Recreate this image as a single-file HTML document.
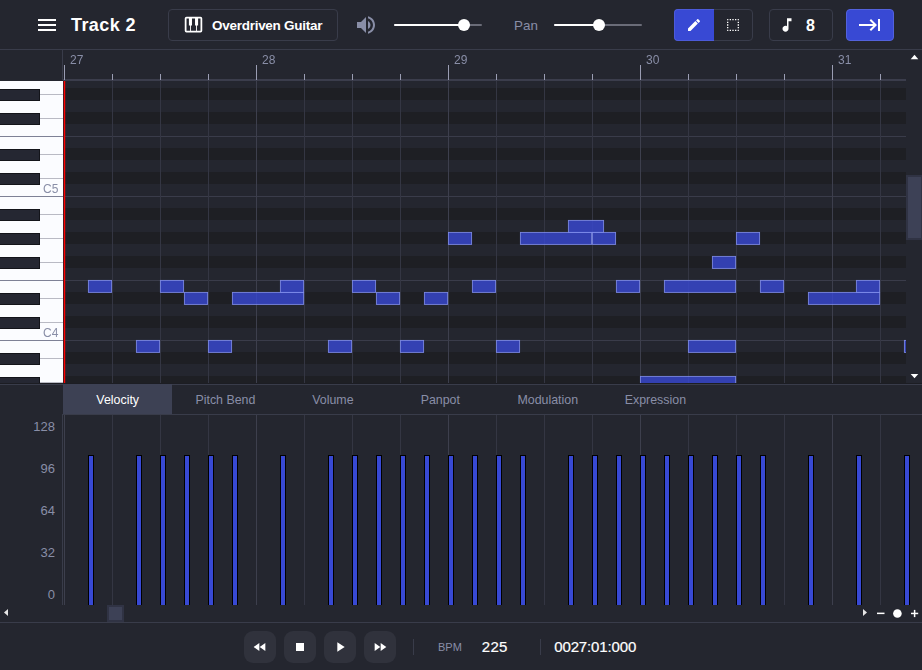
<!DOCTYPE html>
<html><head><meta charset="utf-8"><title>signal</title>
<style>

html,body{margin:0;padding:0;}
body{width:922px;height:670px;overflow:hidden;background:#24262f;font-family:"Liberation Sans",sans-serif;color:#fff;position:relative;}
.abs{position:absolute;}
.t{position:absolute;white-space:nowrap;line-height:1;}
svg{position:absolute;display:block;overflow:visible;}
.btn{position:absolute;box-sizing:border-box;border:1px solid #393c4a;border-radius:4px;}
.tab{position:absolute;top:384.6px;height:30px;line-height:30px;font-size:12.4px;color:#898ea7;text-align:center;white-space:nowrap;}
.tp{position:absolute;top:631px;width:32px;height:32px;border-radius:9px;background:#30323c;}
.rl,.kl{will-change:transform;}
.ax{position:absolute;right:867px;font-size:13px;color:#898ea7;line-height:1;white-space:nowrap;}

</style></head><body>
<div class="abs" style="left:0;top:49px;width:922px;height:1px;background:#393c4a"></div>
<svg style="left:35px;top:13px" width="24" height="24" viewBox="0 0 24 24"><path fill="#fff" d="M3 18h18v-2H3v2zm0-5h18v-2H3v2zm0-7v2h18V6H3z"/></svg>
<div class="t" id="title" style="left:71px;top:16px;font-size:18px;font-weight:bold;letter-spacing:0.4px;">Track 2</div>
<div class="btn" style="left:168px;top:9px;width:170px;height:32px;"></div>
<svg style="left:183.25px;top:14px" width="21" height="21" viewBox="0 0 24 24"><path fill="#fff" d="M4,3H20A2,2 0 0,1 22,5V19A2,2 0 0,1 20,21H4A2,2 0 0,1 2,19V5A2,2 0 0,1 4,3M4,5V19H8V13H6.75V5H4M9,19H15V13H13.750V5H10.25V13H9V19M16,19H20V5H17.25V13H16V19Z"/></svg>
<div class="t" id="inst" style="left:212px;top:18.5px;font-size:13.5px;font-weight:bold;letter-spacing:-0.27px;">Overdriven Guitar</div>
<svg style="left:354px;top:13px" width="24" height="24" viewBox="0 0 24 24"><path fill="#898ea7" d="M3 9v6h4l5 5V4L7 9H3zm13.500 3c0-1.770-1.020-3.290-2.500-4.030v8.050c1.480-.730 2.500-2.250 2.500-4.020zM14 3.230v2.060c2.890.860 5 3.540 5 6.710s-2.110 5.850-5 6.710v2.060c4.010-.910 7-4.490 7-8.770s-2.990-7.860-7-8.770z"/></svg>
<div class="abs" style="left:394px;top:24px;width:88px;height:2px;background:#6a6c78;border-radius:1px"></div>
<div class="abs" style="left:394px;top:24px;width:70.0px;height:2px;background:#fff;border-radius:1px"></div>
<div class="abs" style="left:458.0px;top:19px;width:12px;height:12px;border-radius:6px;background:#fff"></div>
<div class="t" id="pan" style="left:514px;top:19px;font-size:13.4px;color:#898ea7">Pan</div>
<div class="abs" style="left:554px;top:24px;width:88px;height:2px;background:#6a6c78;border-radius:1px"></div>
<div class="abs" style="left:554px;top:24px;width:44.5px;height:2px;background:#fff;border-radius:1px"></div>
<div class="abs" style="left:592.5px;top:19px;width:12px;height:12px;border-radius:6px;background:#fff"></div>
<div class="btn" style="left:674px;top:9px;width:79px;height:32px;"></div>
<div class="abs" style="left:674px;top:9px;width:40px;height:32px;background:#3849d4;border-radius:4px 0 0 4px;box-sizing:border-box;border:1px solid #4c5bda;border-right:none"></div>
<svg style="left:686px;top:17px" width="16" height="16" viewBox="0 0 24 24"><path fill="#fff" d="M20.710,7.040C21.100,6.650 21.100,6 20.710,5.630L18.370,3.290C18,2.900 17.350,2.900 16.960,3.290L15.120,5.120L18.870,8.870M3,17.250V21H6.750L17.810,9.930L14.060,6.180L3,17.250Z"/></svg>
<svg style="left:725.1px;top:17px" width="16" height="16" viewBox="0 0 24 24"><path fill="#fff" d="M4,3H5V5H3V4A1,1 0 0,1 4,3M20,3A1,1 0 0,1 21,4V5H19V3H20M15,5V3H17V5H15M11,5V3H13V5H11M7,5V3H9V5H7M21,20A1,1 0 0,1 20,21H19V19H21V20M15,21V19H17V21H15M11,21V19H13V21H11M7,21V19H9V21H7M4,21A1,1 0 0,1 3,20V19H5V21H4M3,15H5V17H3V15M21,15V17H19V15H21M3,11H5V13H3V11M21,11V13H19V11H21M3,7H5V9H3V7M21,7V9H19V7H21Z"/></svg>
<div class="btn" style="left:769px;top:9px;width:64px;height:32px;"></div>
<svg style="left:778px;top:16px" width="18" height="18" viewBox="0 0 24 24"><path fill="#fff" d="M12 3v10.550c-.590-.340-1.270-.550-2-.550-2.210 0-4 1.790-4 4s1.790 4 4 4 4-1.790 4-4V7h4V3h-6z"/></svg>
<div class="t" id="q8" style="left:806px;top:18px;font-size:16px;font-weight:bold;">8</div>
<div class="abs" style="left:846px;top:9px;width:48px;height:32px;background:#3849d4;border-radius:4px;box-sizing:border-box;border:1px solid #5362dc"></div>
<svg style="left:858px;top:13px" width="24" height="24" viewBox="0 0 24 24"><path fill="#fff" d="M20,18H22V6H20M11.590,7.410L15.170,11H1V13H15.170L11.590,16.580L13,18L19,12L13,6L11.590,7.410Z"/></svg>
<div class="abs" style="left:62px;top:50px;width:1px;height:30px;background:#393c4a"></div>
<div class="abs" style="left:63px;top:79px;width:843px;height:2px;background:#3b3d4c"></div>
<div class="abs" style="left:64px;top:65px;width:1px;height:15px;background:#9a9db3"></div>
<div class="t rl" style="left:70px;top:54px;font-size:12px;color:#898ea7">27</div>
<div class="abs" style="left:112px;top:74px;width:1px;height:6px;background:#9a9db3"></div>
<div class="abs" style="left:160px;top:74px;width:1px;height:6px;background:#9a9db3"></div>
<div class="abs" style="left:208px;top:74px;width:1px;height:6px;background:#9a9db3"></div>
<div class="abs" style="left:256px;top:65px;width:1px;height:15px;background:#9a9db3"></div>
<div class="t rl" style="left:262px;top:54px;font-size:12px;color:#898ea7">28</div>
<div class="abs" style="left:304px;top:74px;width:1px;height:6px;background:#9a9db3"></div>
<div class="abs" style="left:352px;top:74px;width:1px;height:6px;background:#9a9db3"></div>
<div class="abs" style="left:400px;top:74px;width:1px;height:6px;background:#9a9db3"></div>
<div class="abs" style="left:448px;top:65px;width:1px;height:15px;background:#9a9db3"></div>
<div class="t rl" style="left:454px;top:54px;font-size:12px;color:#898ea7">29</div>
<div class="abs" style="left:496px;top:74px;width:1px;height:6px;background:#9a9db3"></div>
<div class="abs" style="left:544px;top:74px;width:1px;height:6px;background:#9a9db3"></div>
<div class="abs" style="left:592px;top:74px;width:1px;height:6px;background:#9a9db3"></div>
<div class="abs" style="left:640px;top:65px;width:1px;height:15px;background:#9a9db3"></div>
<div class="t rl" style="left:646px;top:54px;font-size:12px;color:#898ea7">30</div>
<div class="abs" style="left:688px;top:74px;width:1px;height:6px;background:#9a9db3"></div>
<div class="abs" style="left:736px;top:74px;width:1px;height:6px;background:#9a9db3"></div>
<div class="abs" style="left:784px;top:74px;width:1px;height:6px;background:#9a9db3"></div>
<div class="abs" style="left:832px;top:65px;width:1px;height:15px;background:#9a9db3"></div>
<div class="t rl" style="left:838px;top:54px;font-size:12px;color:#898ea7">31</div>
<div class="abs" style="left:880px;top:74px;width:1px;height:6px;background:#9a9db3"></div>
<svg style="left:64px;top:81px;overflow:hidden" width="842" height="302" viewBox="64 81 842 302" shape-rendering="crispEdges">
<rect x="64" y="81" width="842" height="302" fill="#24262f"/>
<rect x="64" y="376" width="842" height="12" fill="#1e1f24"/>
<rect x="64" y="352" width="842" height="12" fill="#1e1f24"/>
<rect x="64" y="340" width="842" height="1" fill="#3a3c4a"/>
<rect x="64" y="316" width="842" height="12" fill="#1e1f24"/>
<rect x="64" y="292" width="842" height="12" fill="#1e1f24"/>
<rect x="64" y="280" width="842" height="1" fill="#3a3c4a"/>
<rect x="64" y="256" width="842" height="12" fill="#1e1f24"/>
<rect x="64" y="232" width="842" height="12" fill="#1e1f24"/>
<rect x="64" y="208" width="842" height="12" fill="#1e1f24"/>
<rect x="64" y="196" width="842" height="1" fill="#3a3c4a"/>
<rect x="64" y="172" width="842" height="12" fill="#1e1f24"/>
<rect x="64" y="148" width="842" height="12" fill="#1e1f24"/>
<rect x="64" y="136" width="842" height="1" fill="#3a3c4a"/>
<rect x="64" y="112" width="842" height="12" fill="#1e1f24"/>
<rect x="64" y="88" width="842" height="12" fill="#1e1f24"/>
<rect x="64" y="81" width="1" height="302" fill="#3d3f4d"/>
<rect x="112" y="81" width="1" height="302" fill="#343643"/>
<rect x="160" y="81" width="1" height="302" fill="#343643"/>
<rect x="208" y="81" width="1" height="302" fill="#343643"/>
<rect x="256" y="81" width="1" height="302" fill="#3d3f4d"/>
<rect x="304" y="81" width="1" height="302" fill="#343643"/>
<rect x="352" y="81" width="1" height="302" fill="#343643"/>
<rect x="400" y="81" width="1" height="302" fill="#343643"/>
<rect x="448" y="81" width="1" height="302" fill="#3d3f4d"/>
<rect x="496" y="81" width="1" height="302" fill="#343643"/>
<rect x="544" y="81" width="1" height="302" fill="#343643"/>
<rect x="592" y="81" width="1" height="302" fill="#343643"/>
<rect x="640" y="81" width="1" height="302" fill="#3d3f4d"/>
<rect x="688" y="81" width="1" height="302" fill="#343643"/>
<rect x="736" y="81" width="1" height="302" fill="#343643"/>
<rect x="784" y="81" width="1" height="302" fill="#343643"/>
<rect x="832" y="81" width="1" height="302" fill="#3d3f4d"/>
<rect x="880" y="81" width="1" height="302" fill="#343643"/>
</svg>
<svg style="left:64px;top:81px;overflow:hidden" width="842" height="302" viewBox="64 81 842 302">
<rect x="88.40" y="280.40" width="23.20" height="12" fill="#3849d4" fill-opacity="0.8" stroke="#8390ec" stroke-opacity="0.9" stroke-width="0.9"/>
<rect x="136.40" y="340.40" width="23.20" height="12" fill="#3849d4" fill-opacity="0.8" stroke="#8390ec" stroke-opacity="0.9" stroke-width="0.9"/>
<rect x="160.40" y="280.40" width="23.20" height="12" fill="#3849d4" fill-opacity="0.8" stroke="#8390ec" stroke-opacity="0.9" stroke-width="0.9"/>
<rect x="184.40" y="292.40" width="23.20" height="12" fill="#3849d4" fill-opacity="0.8" stroke="#8390ec" stroke-opacity="0.9" stroke-width="0.9"/>
<rect x="208.40" y="340.40" width="23.20" height="12" fill="#3849d4" fill-opacity="0.8" stroke="#8390ec" stroke-opacity="0.9" stroke-width="0.9"/>
<rect x="232.40" y="292.40" width="71.20" height="12" fill="#3849d4" fill-opacity="0.8" stroke="#8390ec" stroke-opacity="0.9" stroke-width="0.9"/>
<rect x="280.40" y="280.40" width="23.20" height="12" fill="#3849d4" fill-opacity="0.8" stroke="#8390ec" stroke-opacity="0.9" stroke-width="0.9"/>
<rect x="328.40" y="340.40" width="23.20" height="12" fill="#3849d4" fill-opacity="0.8" stroke="#8390ec" stroke-opacity="0.9" stroke-width="0.9"/>
<rect x="352.40" y="280.40" width="23.20" height="12" fill="#3849d4" fill-opacity="0.8" stroke="#8390ec" stroke-opacity="0.9" stroke-width="0.9"/>
<rect x="376.40" y="292.40" width="23.20" height="12" fill="#3849d4" fill-opacity="0.8" stroke="#8390ec" stroke-opacity="0.9" stroke-width="0.9"/>
<rect x="400.40" y="340.40" width="23.20" height="12" fill="#3849d4" fill-opacity="0.8" stroke="#8390ec" stroke-opacity="0.9" stroke-width="0.9"/>
<rect x="424.40" y="292.40" width="23.20" height="12" fill="#3849d4" fill-opacity="0.8" stroke="#8390ec" stroke-opacity="0.9" stroke-width="0.9"/>
<rect x="448.40" y="232.40" width="23.20" height="12" fill="#3849d4" fill-opacity="0.8" stroke="#8390ec" stroke-opacity="0.9" stroke-width="0.9"/>
<rect x="472.40" y="280.40" width="23.20" height="12" fill="#3849d4" fill-opacity="0.8" stroke="#8390ec" stroke-opacity="0.9" stroke-width="0.9"/>
<rect x="496.40" y="340.40" width="23.20" height="12" fill="#3849d4" fill-opacity="0.8" stroke="#8390ec" stroke-opacity="0.9" stroke-width="0.9"/>
<rect x="520.40" y="232.40" width="71.20" height="12" fill="#3849d4" fill-opacity="0.8" stroke="#8390ec" stroke-opacity="0.9" stroke-width="0.9"/>
<rect x="568.40" y="220.40" width="35.20" height="12" fill="#3849d4" fill-opacity="0.8" stroke="#8390ec" stroke-opacity="0.9" stroke-width="0.9"/>
<rect x="592.40" y="232.40" width="23.20" height="12" fill="#3849d4" fill-opacity="0.8" stroke="#8390ec" stroke-opacity="0.9" stroke-width="0.9"/>
<rect x="616.40" y="280.40" width="23.20" height="12" fill="#3849d4" fill-opacity="0.8" stroke="#8390ec" stroke-opacity="0.9" stroke-width="0.9"/>
<rect x="640.40" y="376.40" width="95.20" height="12" fill="#3849d4" fill-opacity="0.8" stroke="#8390ec" stroke-opacity="0.9" stroke-width="0.9"/>
<rect x="664.40" y="280.40" width="71.20" height="12" fill="#3849d4" fill-opacity="0.8" stroke="#8390ec" stroke-opacity="0.9" stroke-width="0.9"/>
<rect x="688.40" y="340.40" width="47.20" height="12" fill="#3849d4" fill-opacity="0.8" stroke="#8390ec" stroke-opacity="0.9" stroke-width="0.9"/>
<rect x="712.40" y="256.40" width="23.20" height="12" fill="#3849d4" fill-opacity="0.8" stroke="#8390ec" stroke-opacity="0.9" stroke-width="0.9"/>
<rect x="736.40" y="232.40" width="23.20" height="12" fill="#3849d4" fill-opacity="0.8" stroke="#8390ec" stroke-opacity="0.9" stroke-width="0.9"/>
<rect x="760.40" y="280.40" width="23.20" height="12" fill="#3849d4" fill-opacity="0.8" stroke="#8390ec" stroke-opacity="0.9" stroke-width="0.9"/>
<rect x="808.40" y="292.40" width="71.20" height="12" fill="#3849d4" fill-opacity="0.8" stroke="#8390ec" stroke-opacity="0.9" stroke-width="0.9"/>
<rect x="856.40" y="280.40" width="23.20" height="12" fill="#3849d4" fill-opacity="0.8" stroke="#8390ec" stroke-opacity="0.9" stroke-width="0.9"/>
<rect x="904.40" y="340.40" width="23.20" height="12" fill="#3849d4" fill-opacity="0.8" stroke="#8390ec" stroke-opacity="0.9" stroke-width="0.9"/>
</svg>
<div class="abs" style="left:0;top:81px;width:64px;height:302px;background:#1e1f24"></div>
<div class="abs" style="left:0;top:81px;width:63px;height:302px;background:#fbfcff;overflow:hidden">
<div class="abs" style="left:40px;top:301px;width:23px;height:1px;background:#b9bac4"></div>
<div class="abs" style="left:-1px;top:296px;width:41px;height:12px;background:#252732;box-sizing:border-box;border:1px solid #13141a"></div>
<div class="abs" style="left:40px;top:277px;width:23px;height:1px;background:#b9bac4"></div>
<div class="abs" style="left:-1px;top:272px;width:41px;height:12px;background:#252732;box-sizing:border-box;border:1px solid #13141a"></div>
<div class="abs" style="left:0;top:259px;width:63px;height:1px;background:#7e8196"></div>
<div class="t kl" style="right:4.5px;top:246px;font-size:12px;color:#898ea7">C4</div>
<div class="abs" style="left:40px;top:241px;width:23px;height:1px;background:#b9bac4"></div>
<div class="abs" style="left:-1px;top:236px;width:41px;height:12px;background:#252732;box-sizing:border-box;border:1px solid #13141a"></div>
<div class="abs" style="left:40px;top:217px;width:23px;height:1px;background:#b9bac4"></div>
<div class="abs" style="left:-1px;top:212px;width:41px;height:12px;background:#252732;box-sizing:border-box;border:1px solid #13141a"></div>
<div class="abs" style="left:0;top:199px;width:63px;height:1px;background:#7e8196"></div>
<div class="abs" style="left:40px;top:181px;width:23px;height:1px;background:#b9bac4"></div>
<div class="abs" style="left:-1px;top:176px;width:41px;height:12px;background:#252732;box-sizing:border-box;border:1px solid #13141a"></div>
<div class="abs" style="left:40px;top:157px;width:23px;height:1px;background:#b9bac4"></div>
<div class="abs" style="left:-1px;top:152px;width:41px;height:12px;background:#252732;box-sizing:border-box;border:1px solid #13141a"></div>
<div class="abs" style="left:40px;top:133px;width:23px;height:1px;background:#b9bac4"></div>
<div class="abs" style="left:-1px;top:128px;width:41px;height:12px;background:#252732;box-sizing:border-box;border:1px solid #13141a"></div>
<div class="abs" style="left:0;top:115px;width:63px;height:1px;background:#7e8196"></div>
<div class="t kl" style="right:4.5px;top:102px;font-size:12px;color:#898ea7">C5</div>
<div class="abs" style="left:40px;top:97px;width:23px;height:1px;background:#b9bac4"></div>
<div class="abs" style="left:-1px;top:92px;width:41px;height:12px;background:#252732;box-sizing:border-box;border:1px solid #13141a"></div>
<div class="abs" style="left:40px;top:73px;width:23px;height:1px;background:#b9bac4"></div>
<div class="abs" style="left:-1px;top:68px;width:41px;height:12px;background:#252732;box-sizing:border-box;border:1px solid #13141a"></div>
<div class="abs" style="left:0;top:55px;width:63px;height:1px;background:#7e8196"></div>
<div class="abs" style="left:40px;top:37px;width:23px;height:1px;background:#b9bac4"></div>
<div class="abs" style="left:-1px;top:32px;width:41px;height:12px;background:#252732;box-sizing:border-box;border:1px solid #13141a"></div>
<div class="abs" style="left:40px;top:13px;width:23px;height:1px;background:#b9bac4"></div>
<div class="abs" style="left:-1px;top:8px;width:41px;height:12px;background:#252732;box-sizing:border-box;border:1px solid #13141a"></div>
</div>
<svg style="left:62px;top:81px" width="5" height="302"><rect x="1.750" y="0" width="1.450" height="302" fill="#ff0000"/></svg>
<div class="abs" style="left:906px;top:50px;width:16px;height:334px;background:#24262f"></div>
<div class="abs" style="left:906px;top:175px;width:16px;height:65px;background:#303344"></div>
<div class="abs" style="left:908px;top:177px;width:13px;height:61px;background:#3d4156"></div>
<svg style="left:906px;top:50px" width="16" height="340"><path d="M4.700 9.200L8.500 4.800L12.300 9.200Z" fill="#fff"/><path d="M4.700 324L8.500 328.300L12.300 324Z" fill="#fff"/></svg>
<div class="abs" style="left:0;top:383px;width:922px;height:1px;background:#1c1d23"></div>
<div class="abs" style="left:0;top:384px;width:922px;height:1px;background:#393c4a"></div>
<div class="abs" style="left:63px;top:384px;width:109px;height:30px;background:#3d4154"></div>
<div class="abs" style="left:62px;top:414px;width:860px;height:1px;background:#393c4a"></div>
<div class="tab" style="left:63.7px;width:108px;color:#fff;">Velocity</div>
<div class="tab" style="left:171.4px;width:108px;">Pitch Bend</div>
<div class="tab" style="left:278.9px;width:108px;">Volume</div>
<div class="tab" style="left:386.3px;width:108px;">Panpot</div>
<div class="tab" style="left:493.8px;width:108px;">Modulation</div>
<div class="tab" style="left:601.4px;width:108px;">Expression</div>
<div class="abs" style="left:62px;top:415px;width:1px;height:190px;background:#393c4a"></div>
<div class="ax" style="top:420.0px">128</div>
<div class="ax" style="top:462.0px">96</div>
<div class="ax" style="top:504.0px">64</div>
<div class="ax" style="top:546.0px">32</div>
<div class="ax" style="top:588.0px">0</div>
<svg style="left:64px;top:415px;overflow:hidden" width="858" height="190" viewBox="64 415 858 190" shape-rendering="crispEdges">
<rect x="64" y="415" width="1" height="190" fill="#3d3f4d"/>
<rect x="112" y="415" width="1" height="190" fill="#343643"/>
<rect x="160" y="415" width="1" height="190" fill="#343643"/>
<rect x="208" y="415" width="1" height="190" fill="#343643"/>
<rect x="256" y="415" width="1" height="190" fill="#3d3f4d"/>
<rect x="304" y="415" width="1" height="190" fill="#343643"/>
<rect x="352" y="415" width="1" height="190" fill="#343643"/>
<rect x="400" y="415" width="1" height="190" fill="#343643"/>
<rect x="448" y="415" width="1" height="190" fill="#3d3f4d"/>
<rect x="496" y="415" width="1" height="190" fill="#343643"/>
<rect x="544" y="415" width="1" height="190" fill="#343643"/>
<rect x="592" y="415" width="1" height="190" fill="#343643"/>
<rect x="640" y="415" width="1" height="190" fill="#3d3f4d"/>
<rect x="688" y="415" width="1" height="190" fill="#343643"/>
<rect x="736" y="415" width="1" height="190" fill="#343643"/>
<rect x="784" y="415" width="1" height="190" fill="#343643"/>
<rect x="832" y="415" width="1" height="190" fill="#3d3f4d"/>
<rect x="880" y="415" width="1" height="190" fill="#343643"/>
<rect x="88" y="455" width="6" height="150" fill="#000"/>
<rect x="89" y="456" width="4" height="149" fill="#3849d4"/>
<rect x="136" y="455" width="6" height="150" fill="#000"/>
<rect x="137" y="456" width="4" height="149" fill="#3849d4"/>
<rect x="160" y="455" width="6" height="150" fill="#000"/>
<rect x="161" y="456" width="4" height="149" fill="#3849d4"/>
<rect x="184" y="455" width="6" height="150" fill="#000"/>
<rect x="185" y="456" width="4" height="149" fill="#3849d4"/>
<rect x="208" y="455" width="6" height="150" fill="#000"/>
<rect x="209" y="456" width="4" height="149" fill="#3849d4"/>
<rect x="232" y="455" width="6" height="150" fill="#000"/>
<rect x="233" y="456" width="4" height="149" fill="#3849d4"/>
<rect x="280" y="455" width="6" height="150" fill="#000"/>
<rect x="281" y="456" width="4" height="149" fill="#3849d4"/>
<rect x="328" y="455" width="6" height="150" fill="#000"/>
<rect x="329" y="456" width="4" height="149" fill="#3849d4"/>
<rect x="352" y="455" width="6" height="150" fill="#000"/>
<rect x="353" y="456" width="4" height="149" fill="#3849d4"/>
<rect x="376" y="455" width="6" height="150" fill="#000"/>
<rect x="377" y="456" width="4" height="149" fill="#3849d4"/>
<rect x="400" y="455" width="6" height="150" fill="#000"/>
<rect x="401" y="456" width="4" height="149" fill="#3849d4"/>
<rect x="424" y="455" width="6" height="150" fill="#000"/>
<rect x="425" y="456" width="4" height="149" fill="#3849d4"/>
<rect x="448" y="455" width="6" height="150" fill="#000"/>
<rect x="449" y="456" width="4" height="149" fill="#3849d4"/>
<rect x="472" y="455" width="6" height="150" fill="#000"/>
<rect x="473" y="456" width="4" height="149" fill="#3849d4"/>
<rect x="496" y="455" width="6" height="150" fill="#000"/>
<rect x="497" y="456" width="4" height="149" fill="#3849d4"/>
<rect x="520" y="455" width="6" height="150" fill="#000"/>
<rect x="521" y="456" width="4" height="149" fill="#3849d4"/>
<rect x="568" y="455" width="6" height="150" fill="#000"/>
<rect x="569" y="456" width="4" height="149" fill="#3849d4"/>
<rect x="592" y="455" width="6" height="150" fill="#000"/>
<rect x="593" y="456" width="4" height="149" fill="#3849d4"/>
<rect x="616" y="455" width="6" height="150" fill="#000"/>
<rect x="617" y="456" width="4" height="149" fill="#3849d4"/>
<rect x="640" y="455" width="6" height="150" fill="#000"/>
<rect x="641" y="456" width="4" height="149" fill="#3849d4"/>
<rect x="664" y="455" width="6" height="150" fill="#000"/>
<rect x="665" y="456" width="4" height="149" fill="#3849d4"/>
<rect x="688" y="455" width="6" height="150" fill="#000"/>
<rect x="689" y="456" width="4" height="149" fill="#3849d4"/>
<rect x="712" y="455" width="6" height="150" fill="#000"/>
<rect x="713" y="456" width="4" height="149" fill="#3849d4"/>
<rect x="736" y="455" width="6" height="150" fill="#000"/>
<rect x="737" y="456" width="4" height="149" fill="#3849d4"/>
<rect x="760" y="455" width="6" height="150" fill="#000"/>
<rect x="761" y="456" width="4" height="149" fill="#3849d4"/>
<rect x="808" y="455" width="6" height="150" fill="#000"/>
<rect x="809" y="456" width="4" height="149" fill="#3849d4"/>
<rect x="856" y="455" width="6" height="150" fill="#000"/>
<rect x="857" y="456" width="4" height="149" fill="#3849d4"/>
<rect x="904" y="455" width="6" height="150" fill="#000"/>
<rect x="905" y="456" width="4" height="149" fill="#3849d4"/>
</svg>
<div class="abs" style="left:0;top:605px;width:922px;height:17px;background:#24262f"></div>
<div class="abs" style="left:107px;top:605px;width:17px;height:17px;background:#303344"></div>
<div class="abs" style="left:109px;top:607px;width:13px;height:13px;background:#3d4156"></div>
<svg style="left:0;top:605px" width="922" height="17">
<path d="M4 7.500L8 4L8 11Z" fill="#e6e6e6"/>
<path d="M867 7.500L863 4L863 11Z" fill="#e6e6e6"/>
<rect x="877" y="7.600" width="7.500" height="1.500" fill="#fff"/>
<circle cx="897.400" cy="8.500" r="4.300" fill="#fff"/>
<rect x="911" y="7.700" width="7.200" height="1.500" fill="#fff"/>
<rect x="913.850" y="4.900" width="1.500" height="7.200" fill="#fff"/>
</svg>
<div class="abs" style="left:0;top:622px;width:922px;height:1px;background:#393c4a"></div>
<div class="tp" style="left:244px"></div>
<svg style="left:252px;top:639px" width="16" height="16" viewBox="0 0 24 24"><path fill="#fff" d="M11 18V6l-8.500 6 8.500 6zm.500-6l8.500 6V6l-8.500 6z"/></svg>
<div class="tp" style="left:284px"></div>
<svg style="left:292px;top:639px" width="16" height="16" viewBox="0 0 24 24"><path fill="#fff" d="M6 6h12v12H6z"/></svg>
<div class="tp" style="left:324px"></div>
<svg style="left:332px;top:639px" width="16" height="16" viewBox="0 0 24 24"><path fill="#fff" d="M8 5v14l11-7z"/></svg>
<div class="tp" style="left:364px"></div>
<svg style="left:372px;top:639px" width="16" height="16" viewBox="0 0 24 24"><path fill="#fff" d="M4 18l8.500-6L4 6v12zm9-12v12l8.500-6L13 6z"/></svg>
<div class="abs" style="left:413px;top:639px;width:1px;height:16px;background:#393c4a"></div>
<div class="t" id="bpm" style="left:438px;top:642px;font-size:11px;color:#898ea7">BPM</div>
<div class="t" id="tempo" style="left:481.800px;top:639px;font-size:15px;letter-spacing:0.25px;-webkit-text-stroke:0.2px #fff;">225</div>
<div class="abs" style="left:540px;top:639px;width:1px;height:16px;background:#393c4a"></div>
<div class="t" id="time" style="left:554.200px;top:639px;font-size:15px;letter-spacing:-0.12px;-webkit-text-stroke:0.2px #fff;">0027:01:000</div>
</body></html>
